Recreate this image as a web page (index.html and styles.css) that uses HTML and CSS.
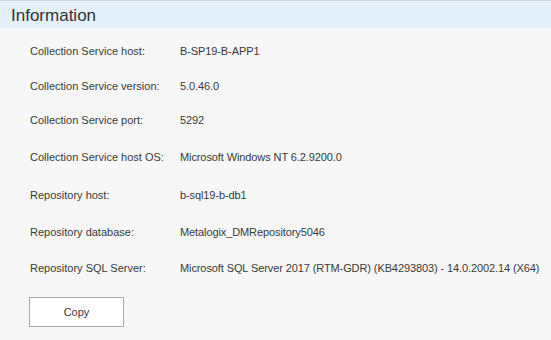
FILE: index.html
```html
<!DOCTYPE html>
<html lang="en">
<head>
  <meta charset="UTF-8"/>
  <title>Information</title>
  <link rel="stylesheet" href="styles.css">
</head>
<body>
  <div class="panel">
    <div class="panel-header">Information</div>

    <div class="info-grid">
      <div class="label">Collection Service host:</div>
      <div class="value">B-SP19-B-APP1</div>

      <div class="label">Collection Service version:</div>
      <div class="value">5.0.46.0</div>

      <div class="label">Collection Service port:</div>
      <div class="value">5292</div>

      <div class="label">Collection Service host OS:</div>
      <div class="value">Microsoft Windows NT 6.2.9200.0</div>

      <div class="label">Repository host:</div>
      <div class="value">b-sql19-b-db1</div>

      <div class="label">Repository database:</div>
      <div class="value">Metalogix_DMRepository5046</div>

      <div class="label">Repository SQL Server:</div>
      <div class="value">Microsoft SQL Server 2017 (RTM-GDR) (KB4293803) - 14.0.2002.14 (X64)</div>
    </div>

    <div class="actions">
      <button class="copy-btn">Copy</button>
    </div>
  </div>
</body>
</html>
```
FILE: styles.css
```css
* {
  box-sizing: border-box;
}

html, body {
  margin: 0;
  height: 100%;
}

body {
  background: #f7f7f7;
  font-family: 'Liberation Sans', Arial, sans-serif;
  font-size: 11px;
  color: #3a3a3a;
}

.panel {
  border-top: 1px solid #d2d2d2;
}

.panel-header {
  height: 27px;
  background: #e3f0fa;
  padding: 5px 0 0 11px;
  font-family: 'Liberation Sans', Arial, sans-serif;
  font-size: 17px;
  color: #333;
}

.info-grid {
  display: grid;
  grid-template-columns: 150px 1fr;
  grid-template-rows: 36px 34px 34px 39px 38px 35px 38px;
  align-items: center;
  padding: 5px 0 0 30px;
}

.value {
  letter-spacing: -0.1px;
}

.actions {
  padding: 10px 0 0 29px;
}

.copy-btn {
  width: 95px;
  height: 30px;
  background: #fff;
  border: 1px solid #aaa;
  font-family: 'Liberation Sans', Arial, sans-serif;
  font-size: 11px;
  color: #3a3a3a;
}
```
